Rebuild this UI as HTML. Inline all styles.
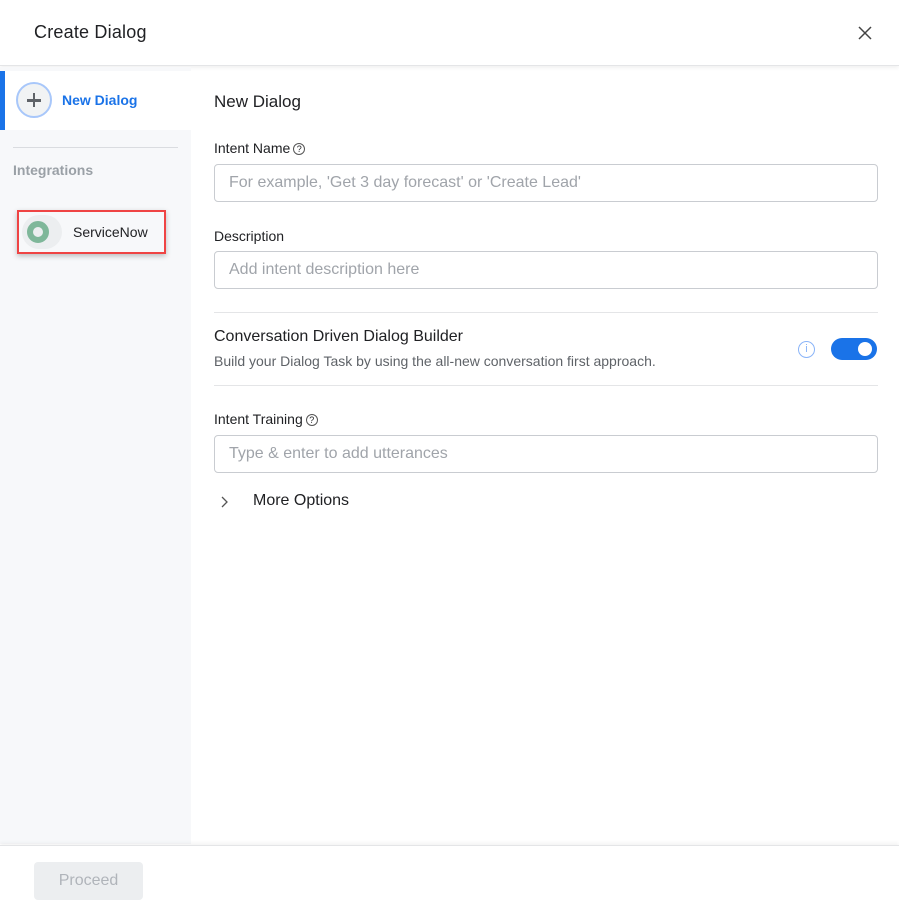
<!DOCTYPE html>
<html><head><style>
*{box-sizing:border-box;margin:0;padding:0}
body{width:899px;height:913px;background:#fff;font-family:"Liberation Sans",sans-serif;position:relative;overflow:hidden;color:#202124}
.hdr{position:absolute;left:0;top:0;width:899px;height:66px;border-bottom:1px solid #e4e5e7;box-shadow:0 2px 4px rgba(0,0,0,.06)}
.hdr h1{position:absolute;left:34px;top:22px;font-size:18px;font-weight:normal;color:#202124;letter-spacing:.2px}
.side{position:absolute;left:0;top:67px;width:191px;height:777px;background:#f7f8fa}
.nd{position:absolute;left:0;top:4px;width:191px;height:59px;background:#fff;border-left:5px solid #1a73e8}
.plus{position:absolute;left:11px;top:11px;width:36px;height:36px;border:2px solid #a8c7fa;border-radius:50%;background:#f1f3f4}
.plus:before{content:"";position:absolute;left:9px;top:15px;width:14px;height:2.5px;background:#5f6368}
.plus:after{content:"";position:absolute;left:14.7px;top:9.3px;width:2.5px;height:14px;background:#5f6368}
.nd span{position:absolute;left:57px;top:21px;font-size:14px;color:#1a73e8;font-weight:bold}
.sep{position:absolute;left:13px;top:80px;width:165px;border-top:1px solid #dadce0}
.int{position:absolute;left:13px;top:95px;font-size:14px;color:#9aa0a6;font-weight:bold}
.sn{position:absolute;left:17px;top:143px;width:149px;height:44px;border:2px solid #ef4444;background:#f7f8fa;box-shadow:0 2px 5px rgba(0,0,0,.25)}
.sn .ic{position:absolute;left:3px;top:3px;width:40px;height:34px;border-radius:17px;background:#eceef0}
.sn .ic i{position:absolute;left:5px;top:6px;width:22px;height:22px;border-radius:50%;border:6px solid #7fb79a}
.sn span{position:absolute;left:54px;top:12px;font-size:14px}
.main{position:absolute;left:214px}
.lbl{font-size:14px;color:#202124}
.inp{position:absolute;left:214px;width:664px;height:38px;border:1px solid #c9ccd1;border-radius:4px;font-size:16px;color:#a0a4aa;padding:9px 14px}
.q{display:inline-block;width:12px;height:12px;border:1px solid #555;border-radius:50%;font-size:9px;text-align:center;line-height:11px;vertical-align:1px;margin-left:3px}
.foot{position:absolute;left:0;top:845px;width:899px;height:68px;border-top:1px solid #e4e5e7;box-shadow:0 -2px 4px rgba(0,0,0,.05)}
.btn{position:absolute;left:34px;top:16px;width:109px;height:38px;background:#eceef0;border-radius:4px;color:#b0b4ba;font-size:16px;text-align:center;line-height:38px}
</style></head><body>
<div class="hdr"><h1>Create Dialog</h1>
<svg style="position:absolute;left:858px;top:26px" width="14" height="14"><path d="M1 1L13 13M13 1L1 13" stroke="#444" stroke-width="1.5"/></svg></div>
<div class="side">
<div class="nd"><div class="plus"></div><span>New Dialog</span></div>
<div class="sep"></div><div class="int">Integrations</div>
<div class="sn"><div class="ic"><i></i></div><span>ServiceNow</span></div>
</div>
<div class="main" style="top:92px;font-size:17px">New Dialog</div>
<div class="main lbl" style="top:140px">Intent Name<span class="q">?</span></div>
<div class="inp" style="top:164px">For example, 'Get 3 day forecast' or 'Create Lead'</div>
<div class="main lbl" style="top:228px">Description</div>
<div class="inp" style="top:251px">Add intent description here</div>
<div style="position:absolute;left:214px;top:312px;width:664px;border-top:1px solid #e4e5e7"></div>
<div class="main" style="top:328px;font-size:16px">Conversation Driven Dialog Builder</div>
<div class="main" style="top:353px;font-size:14px;color:#5f6368">Build your Dialog Task by using the all-new conversation first approach.</div>
<div style="position:absolute;left:798px;top:341px;width:17px;height:17px;border:1.5px solid #8ab4f8;border-radius:50%;color:#8ab4f8;font-size:11px;text-align:center;line-height:14px">i</div>
<div style="position:absolute;left:831px;top:338px;width:46px;height:22px;background:#1a73e8;border-radius:11px"><div style="position:absolute;right:5px;top:4px;width:14px;height:14px;border-radius:50%;background:#fff"></div></div>
<div style="position:absolute;left:214px;top:385px;width:664px;border-top:1px solid #e4e5e7"></div>
<div class="main lbl" style="top:411px">Intent Training<span class="q">?</span></div>
<div class="inp" style="top:435px">Type &amp; enter to add utterances</div>
<svg style="position:absolute;left:220px;top:495px" width="10" height="14"><path d="M2 2L7 7L2 12" stroke="#555" fill="none" stroke-width="1.3"/></svg>
<div class="main" style="left:253px;top:492px;font-size:16px">More Options</div>
<div class="foot"><div class="btn">Proceed</div></div>
</body></html>
